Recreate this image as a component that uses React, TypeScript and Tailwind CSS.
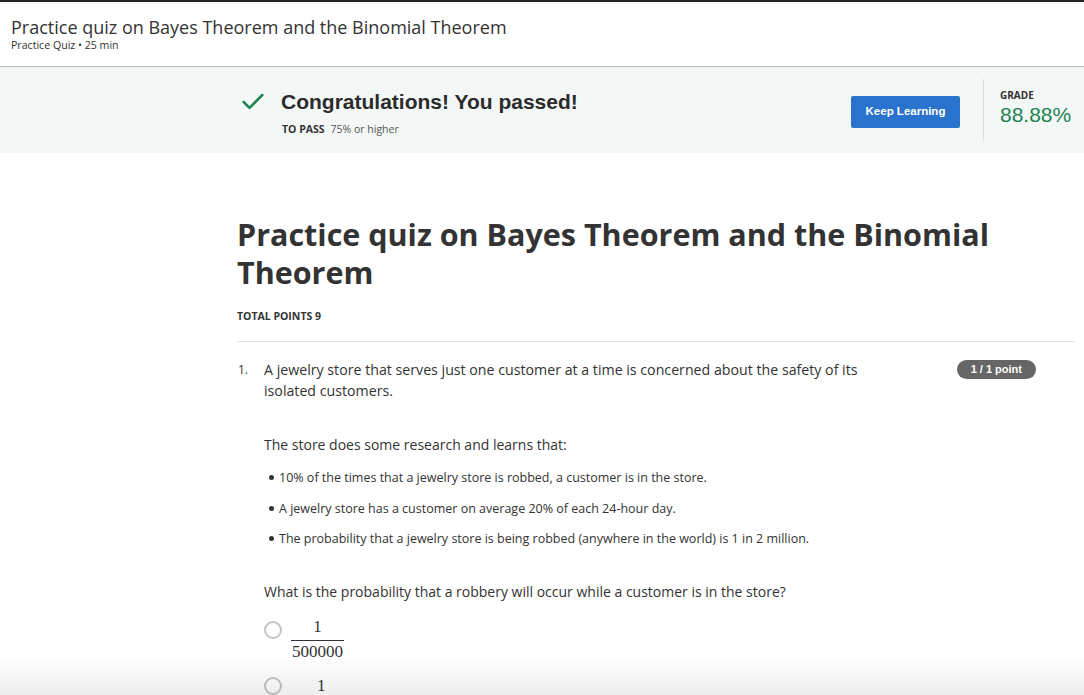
import { Check } from "lucide-react";

const FACTS = [
  "10% of the times that a jewelry store is robbed, a customer is in the store.",
  "A jewelry store has a customer on average 20% of each 24-hour day.",
  "The probability that a jewelry store is being robbed (anywhere in the world) is 1 in 2 million.",
];

function Fraction({ num, den }: { num: string; den: string }) {
  return (
    <span className="inline-flex flex-col items-center font-['Liberation_Serif',serif] text-[17px] leading-[20px] text-[#333]">
      <span className="px-1 pb-[3px]">{num}</span>
      <span className="border-t border-[#333] px-[1px] pt-[1px]">{den}</span>
    </span>
  );
}

export default function App() {
  return (
    <div className="relative h-[695px] overflow-hidden bg-white font-['Open_Sans',sans-serif] text-[#333]">
      {/* ── Header ── */}
      <header className="h-[67px] border-t-2 border-b border-t-[#222] border-b-[#bdbdbd] px-[11px] pt-[14px]">
        <h1 className="text-[18px] leading-[22px] text-[#333]">
          Practice quiz on Bayes Theorem and the Binomial Theorem
        </h1>
        <p className="text-[10.6px] leading-[14px] text-[#333]">Practice Quiz • 25 min</p>
      </header>

      {/* ── Result banner ── */}
      <section className="flex h-[86px] items-center bg-[#f3f8f7] pl-[239px]">
        <div className="flex flex-1 flex-col pt-[3px]">
          <div className="flex items-center gap-[14px]">
            <Check className="h-[28px] w-[28px] text-[#1f8354]" strokeWidth={2.2} />
            <span className="font-['Liberation_Sans',Arial,sans-serif] text-[21px] font-bold leading-[26px] text-[#2b2b2b]">
              Congratulations! You passed!
            </span>
          </div>
          <div className="mt-[6px] pl-[43px] text-[10.5px] leading-[14px]">
            <span className="font-bold">TO PASS</span>
            <span className="ml-[6px] text-[#555]">75% or higher</span>
          </div>
        </div>
        <button className="mr-[23px] mt-[4px] h-[32px] w-[109px] rounded-[2px] bg-[#2a73cc] font-['Liberation_Sans',Arial,sans-serif] text-[11.5px] font-bold text-white">
          Keep Learning
        </button>
        <div className="h-[62px] w-px bg-[#dcdcdc]" />
        <div className="flex w-[100px] flex-col pb-[6px] pl-[16px]">
          <span className="text-[10px] font-bold leading-[14px] text-[#333]">GRADE</span>
          <span className="font-['Liberation_Sans',Arial,sans-serif] text-[21px] leading-[25px] text-[#1f8354]">
            88.88%
          </span>
        </div>
      </section>

      {/* ── Quiz body ── */}
      <main className="ml-[237px] w-[838px] pt-[62px]">
        <h2 className="w-[800px] text-[30.5px] font-bold leading-[38px] text-[#333]">
          Practice quiz on Bayes Theorem and the Binomial Theorem
        </h2>
        <p className="mt-[18px] text-[10.5px] font-bold leading-[14px]">TOTAL POINTS 9</p>

        <div className="mt-[18px] border-t border-[#e1e1e1] pt-[17px]">
          <div className="flex items-start">
            <span className="w-[27px] pl-[1px] text-[12px] leading-[21px]">1.</span>
            <div className="flex-1">
              <div className="flex items-start justify-between">
                <p className="w-[620px] text-[14.2px] leading-[21px]">
                  A jewelry store that serves just one customer at a time is concerned about the safety of its isolated customers.
                </p>
                <span className="mr-[39px] mt-[1px] rounded-full bg-[#666] px-[14px] py-[2px] font-['Liberation_Sans',Arial,sans-serif] text-[11px] font-bold leading-[15px] text-white">
                  1 / 1 point
                </span>
              </div>

              <p className="mt-[33px] text-[14px] leading-[21px]">
                The store does some research and learns that:
              </p>
              <ul className="mt-[12px] flex flex-col gap-[9.5px] pl-[5px]">
                {FACTS.map((f) => (
                  <li key={f} className="flex items-center gap-[5px] text-[12.5px] leading-[21px]">
                    <span className="h-[5px] w-[5px] rounded-full bg-[#333]" />
                    {f}
                  </li>
                ))}
              </ul>

              <p className="mt-[32px] text-[14px] leading-[21px]">
                What is the probability that a robbery will occur while a customer is in the store?
              </p>

              <div className="mt-[15px] flex flex-col gap-[11px]">
                <label className="flex items-start gap-[9px]">
                  <span className="mt-[4px] h-[18px] w-[18px] rounded-full border-2 border-[#c4c4c4] bg-white" />
                  <Fraction num="1" den="500000" />
                </label>
                <label className="flex items-start gap-[9px]">
                  <span className="mt-[4px] h-[18px] w-[18px] rounded-full border-2 border-[#c4c4c4] bg-white" />
                  <span className="pl-[22px]">
                    <Fraction num="1" den="5" />
                  </span>
                </label>
              </div>
            </div>
          </div>
        </div>
      </main>

      {/* bottom fade overlay */}
      <div className="pointer-events-none absolute inset-x-0 bottom-0 h-[40px] bg-gradient-to-b from-black/0 to-black/[0.07]" />
    </div>
  );
}
